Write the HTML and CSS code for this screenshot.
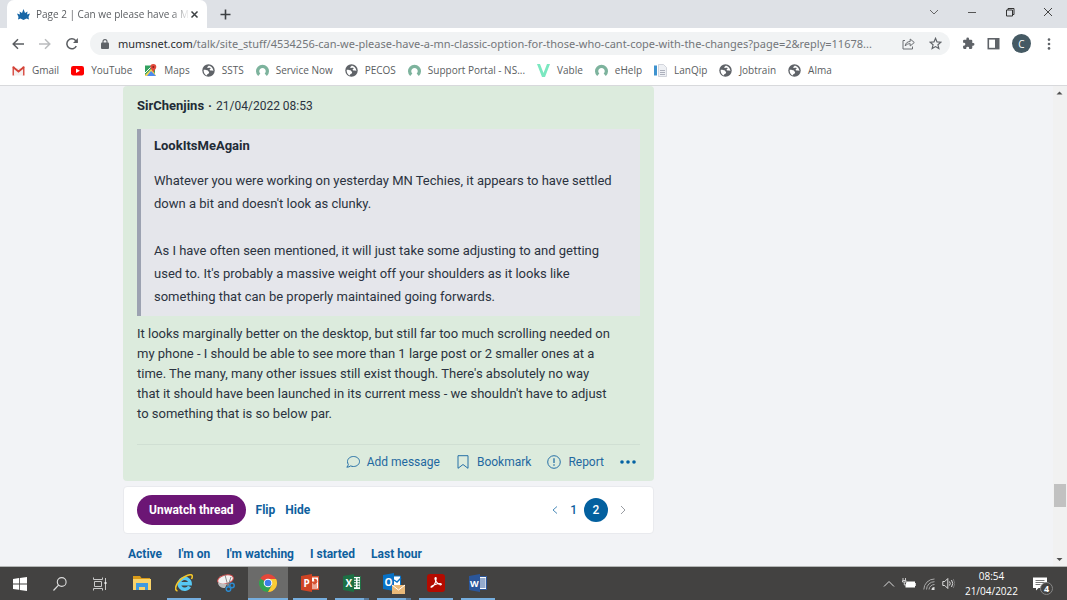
FILE: index.html
```html
<!DOCTYPE html>
<html lang="en">
<head>
<meta charset="utf-8">
<title>Page 2 | Can we please have a MN classic option</title>
<link rel="stylesheet" href="styles.css">
</head>
<body>
<svg class="defs" aria-hidden="true">
  <symbol id="globe" viewBox="0 0 24 24"><circle cx="12" cy="12" r="11.5" fill="#5f6368"/><path d="M3 11c2-1 5 1 8 1 0 2 3 2 2 4-1 3-4 2-4 5-4-1-6-5-6-10zM12 3c-1 2-3 2-2 4 2 1 4-1 6 1 0 2-2 1-2 3 2 2 4 0 7 2 0-5-4-10-9-10z" fill="#fff"/></symbol>
  <symbol id="ring" viewBox="0 0 24 24"><path d="M6 20a9 9 0 1 1 12 0" fill="none" stroke="#7db39d" stroke-width="6"/></symbol>
</svg>

<header class="browser">
  <div class="tabstrip">
    <div class="tab">
      <svg class="favicon i13" viewBox="0 0 26 24"><path d="M0 10l6 2-1-6 5 3 3-8 3 8 5-3-1 6 6-2-3 7 1 5-5-2-6 3-6-3-5 2 1-5z" fill="#1766a6"/></svg>
      <span class="tab-title">Page 2 | Can we please have a M</span>
      <button class="tab-close" aria-label="Close tab"><svg class="i9" viewBox="0 0 9 9"><path d="M1.500 1.500l6 6M7.500 1.500l-6 6" stroke="#3c4043" stroke-width="1.500"/></svg></button>
    </div>
    <button class="newtab" aria-label="New tab"><svg class="i11" viewBox="0 0 11 11"><path d="M5.500 .5v10M.5 5.500h10" stroke="#3c4043" stroke-width="1.600"/></svg></button>
    <div class="window-buttons">
      <button aria-label="Search tabs"><svg class="i10" viewBox="0 0 10 10"><path d="M1 3l4 4 4-4" fill="none" stroke="#666" /></svg></button>
      <button aria-label="Minimise"><svg class="i10" viewBox="0 0 10 10"><path d="M1 5.500h8" stroke="#555"/></svg></button>
      <button aria-label="Restore"><svg class="i10" viewBox="0 0 10 10"><path d="M1.500 3h6v6h-6zM3 3V1.500h6v6H7.500" fill="none" stroke="#333"/></svg></button>
      <button aria-label="Close"><svg class="i10" viewBox="0 0 10 10"><path d="M1 1l8 8M9 1L1 9" stroke="#444"/></svg></button>
    </div>
  </div>

  <div class="toolbar">
    <div class="nav">
      <button aria-label="Back"><svg class="i12" viewBox="0 0 12 12"><path d="M12 6H1.500M6 1.200L1.200 6 6 10.800" fill="none" stroke="#5a5d61" stroke-width="1.500"/></svg></button>
      <button aria-label="Forward"><svg class="i12" viewBox="0 0 12 12"><path d="M0 6h10.500M6 1.200L10.800 6 6 10.800" fill="none" stroke="#babcbe" stroke-width="1.500"/></svg></button>
      <button aria-label="Reload"><svg class="i12" viewBox="0 0 12 12"><path d="M10.300 8.200A5 5 0 1 1 9.600 2.500L11 4" fill="none" stroke="#5a5d61" stroke-width="1.500"/><path d="M11.900 0v5H7z" fill="#5a5d61"/></svg></button>
    </div>
    <div class="omnibox">
      <svg class="lock" viewBox="0 0 8 10"><rect y="3.500" width="8" height="6.500" rx="1" fill="#5f6368"/><path d="M2 4V2.600a2 2 0 0 1 4 0V4" fill="none" stroke="#5f6368" stroke-width="1.100"/></svg>
      <span class="url"><b>mumsnet.com</b>/talk/site_stuff/4534256-can-we-please-have-a-mn-classic-option-for-those-who-cant-cope-with-the-changes?page=2&amp;reply=11678...</span>
      <button aria-label="Share"><svg class="i13" viewBox="0 0 13 13"><path d="M3 3.500H1v8.500h9.500V9.500M3.200 9c.4-3 2-4.300 5-4.500V2L12.300 5.500 8.200 9V6.700C6 6.700 4.500 7.300 3.200 9z" fill="none" stroke="#6b6e72"/></svg></button>
      <button aria-label="Bookmark this page"><svg class="i13" viewBox="0 0 24 24"><path d="M12 2.500l2.800 6.600 7.200.6-5.500 4.700 1.700 7-6.200-3.700-6.200 3.700 1.700-7L2 9.700l7.200-.6z" fill="none" stroke="#5f6368" stroke-width="2.200"/></svg></button>
    </div>
    <div class="tools">
      <button aria-label="Extensions"><svg class="i13" viewBox="0 0 24 24"><path d="M20.500 11H19V7a2 2 0 0 0-2-2h-4V3.500a2.500 2.500 0 0 0-5 0V5H4a2 2 0 0 0-2 2v3.800h1.500a2.700 2.700 0 0 1 0 5.400H2V20a2 2 0 0 0 2 2h3.800v-1.500a2.700 2.700 0 0 1 5.400 0V22H17a2 2 0 0 0 2-2v-4h1.500a2.500 2.500 0 0 0 0-5z" fill="#5f6368"/></svg></button>
      <button aria-label="Side panel"><svg class="i13" viewBox="0 0 13 13"><rect x="1.300" y="1.800" width="10.400" height="9.800" fill="#fff" stroke="#5f6368" stroke-width="1.600"/><path d="M8 1.800h3.700v9.800H8z" fill="#5f6368"/></svg></button>
      <button class="avatar" aria-label="Profile">C</button>
      <button aria-label="Menu"><svg class="i12" viewBox="0 0 12 12"><g fill="#5f6368"><circle cx="6" cy="1.600" r="1.300"/><circle cx="6" cy="6" r="1.300"/><circle cx="6" cy="10.400" r="1.300"/></g></svg></button>
    </div>
  </div>

  <nav class="bookmarks" aria-label="Bookmarks">
    <a href="#"><svg class="i13" viewBox="0 0 13 13"><path d="M.5 2.500h1.800v9H.5zM10.700 2.500h1.800v9h-1.800z" fill="#d9534a"/><path d="M2 4v7.500h9V4" fill="#f5f0f0"/><path d="M1 3l5.500 4.500L12 3" fill="none" stroke="#d44236" stroke-width="1.800"/></svg>Gmail</a>
    <a href="#"><svg class="i13" viewBox="0 0 13 13"><rect y="2" width="13" height="9.500" rx="2.200" fill="#f00"/><path d="M5 4.500v4.500l4-2.250z" fill="#fff"/></svg>YouTube</a>
    <a href="#"><svg class="i13" viewBox="0 0 13 13"><path d="M1 1.500h10v10.500H1z" fill="#34a261"/><path d="M1 11L8 4l4 8H1z" fill="#f3d35c"/><path d="M3 12l4-5 5 5z" fill="#4c8af0"/><path d="M1 9l6-6" stroke="#fff"/><path d="M9.300 0a3 3 0 0 0-3 3c0 2 2 2.800 3 5.500 1-2.700 3-3.500 3-5.500a3 3 0 0 0-3-3z" fill="#e04a3c"/><circle cx="9.300" cy="3" r="1" fill="#8d201b"/></svg>Maps</a>
    <a href="#"><svg class="i13"><use href="#globe"/></svg>SSTS</a>
    <a href="#"><svg class="i13"><use href="#ring"/></svg>Service Now</a>
    <a href="#"><svg class="i13"><use href="#globe"/></svg>PECOS</a>
    <a href="#"><svg class="i13"><use href="#ring"/></svg>Support Portal - NS...</a>
    <a href="#"><svg class="i13" viewBox="0 0 13 13"><path d="M0 0h3l3.500 9L10 0h3L8 13H5z" fill="#7be8c0"/></svg>Vable</a>
    <a href="#"><svg class="i13"><use href="#ring"/></svg>eHelp</a>
    <a href="#"><svg class="i13" viewBox="0 0 13 13"><path d="M0 1.500h3v10H0z" fill="#3f93cf"/><path d="M4.500.5h5l3 3V12.500h-8z" fill="#eef0f4" stroke="#c3c6d0" stroke-width=".7"/><path d="M6 6.500h5M6 8.500h5M6 10.500h5" stroke="#9aa0ad" stroke-width=".8"/></svg>LanQip</a>
    <a href="#"><svg class="i13"><use href="#globe"/></svg>Jobtrain</a>
    <a href="#"><svg class="i13"><use href="#globe"/></svg>Alma</a>
  </nav>
</header>

<div class="viewport">
  <main class="thread">
    <article class="post">
      <header class="post-head"><strong>SirChenjins</strong><span>·</span><time>21/04/2022 08:53</time></header>
      <blockquote class="quote">
        <strong>LookItsMeAgain</strong>
        <p>Whatever you were working on yesterday MN Techies, it appears to have settled down a bit and doesn't look as clunky.</p>
        <p>As I have often seen mentioned, it will just take some adjusting to and getting used to. It's probably a massive weight off your shoulders as it looks like something that can be properly maintained going forwards.</p>
      </blockquote>
      <p class="post-body">It looks marginally better on the desktop, but still far too much scrolling needed on my phone - I should be able to see more than 1 large post or 2 smaller ones at a time. The many, many other issues still exist though. There's absolutely no way that it should have been launched in its current mess - we shouldn't have to adjust to something that is so below par.</p>
      <footer class="actions">
        <button><svg class="i14" viewBox="0 0 14 14"><path d="M7.500 1.500c3.300 0 6 2.200 6 5s-2.700 5-6 5c-1 0-2-.2-2.800-.6-1 .8-2.300 1.300-3.900 1.300.8-.8 1.300-1.700 1.500-2.700-.5-.9-.8-1.900-.8-3 0-2.800 2.700-5 6-5z"/></svg>Add message</button>
        <button><svg class="i14" viewBox="0 0 14 14"><path d="M2 .7h10v12.600L7 9.500l-5 3.800z"/></svg>Bookmark</button>
        <button><svg class="i14" viewBox="0 0 14 14"><circle cx="7" cy="7" r="6.300"/><path d="M7 3.300v4.700M7 9.300v1.500" stroke-width="1.300"/></svg>Report</button>
        <button class="more" aria-label="More"><svg viewBox="0 0 16 4"><circle cx="2" cy="2" r="1.800"/><circle cx="8" cy="2" r="1.800"/><circle cx="14" cy="2" r="1.800"/></svg></button>
      </footer>
    </article>

    <section class="controls">
      <button class="unwatch">Unwatch thread</button>
      <a href="#">Flip</a>
      <a href="#">Hide</a>
      <nav class="pager" aria-label="Pages">
        <a class="arrow" href="#" aria-label="Previous"><svg class="i10" viewBox="0 0 10 10"><path d="M7 1.500L3 5l4 3.500" fill="none" stroke="#4c8cba"/></svg></a>
        <a href="#">1</a>
        <a href="#" class="current" aria-current="page">2</a>
        <a class="arrow" href="#" aria-label="Next"><svg class="i10" viewBox="0 0 10 10"><path d="M3 1l4 4-4 4" fill="none" stroke="#9a9da3"/></svg></a>
      </nav>
    </section>

    <nav class="filters" aria-label="Threads">
      <a href="#">Active</a><a href="#">I'm on</a><a href="#">I'm watching</a><a href="#">I started</a><a href="#">Last hour</a>
    </nav>
  </main>
  <div class="scrollbar" aria-hidden="true">
    <svg viewBox="0 0 13 13"><path d="M3.500 8.500l3-3 3 3z" fill="#505050"/></svg>
    <div class="track"><div class="thumb"></div></div>
    <svg viewBox="0 0 13 13"><path d="M3.500 5l3 3 3-3z" fill="#505050"/></svg>
  </div>
</div>

<footer class="taskbar">
  <div class="system">
    <button aria-label="Start"><svg class="i14" viewBox="0 0 14 14"><path d="M0 2l6-.9v5.400H0zM6.800 1L14 0v6.500H6.800zM0 7.400h6v5.400L0 12zM6.800 7.400H14V14l-7.200-1z" fill="#fff"/></svg></button>
    <button aria-label="Search"><svg class="i14" viewBox="0 0 14 14"><circle cx="8.700" cy="5" r="4.400" fill="none" stroke="#ddd" stroke-width="1.100"/><path d="M5.500 8.200L.5 13.500" stroke="#ddd" stroke-width="1.200"/></svg></button>
    <button aria-label="Task view"><svg class="i14" viewBox="0 0 14 14"><path d="M.5 .5v2h9v-2M.5 13.500v-2h9v2M1.500 4.500h7v5h-7zM12.500 1v4M12.500 7v6" fill="none" stroke="#c9c9c9"/><path d="M11.500 5h2v2h-2z" fill="#eee"/></svg></button>
  </div>
  <div class="apps">
    <button aria-label="File Explorer"><svg class="i18" viewBox="0 0 18 18"><path d="M0 2h7l1.500 2H17v3H0z" fill="#d99a18"/><path d="M0 5h18v11H0z" fill="#f9d36a"/><path d="M3 9h12v7h-3v-3H6v3H3z" fill="#3f9ae0"/></svg></button>
    <button class="open" aria-label="Internet Explorer"><svg class="i18" viewBox="0 0 18 18"><path d="M14.500 12.500a5.500 5.500 0 1 1 .7-2.700H5" fill="none" stroke="#57c8f3" stroke-width="3.400"/><path d="M2.500 17C-2 16 2 6.500 10 2.500c4-2 7-2.500 7.300-.5.200 1-.3 2-.8 3" fill="none" stroke="#f2c52a" stroke-width="1.600"/></svg></button>
    <button aria-label="Snipping Tool"><svg class="i18" viewBox="0 0 18 18"><ellipse cx="8.500" cy="5.500" rx="8" ry="4.500" fill="#f2f2f2" stroke="#cf4a4a" transform="rotate(-15 8.500 5.500)"/><path d="M1 8c3 2 6 2 9 2l-2 4c-4 0-7-2-7-6z" fill="#bdbdbd"/><path d="M8 1l3 11M14 3l-3 9" stroke="#888"/><circle cx="11.500" cy="15" r="2.300" fill="none" stroke="#2c8bd0" stroke-width="1.500"/><circle cx="15" cy="11.500" r="2.200" fill="none" stroke="#2c8bd0" stroke-width="1.500"/></svg></button>
    <button class="open active" aria-label="Chrome"><svg class="i18" viewBox="0 0 18 18"><circle cx="9" cy="9" r="9" fill="#e4473a"/><path d="M9 9L1.200 4.500A9 9 0 0 0 9 18l4-6.500z" fill="#31a352"/><path d="M9 5h8.100A9 9 0 0 1 9 18l4-7z" fill="#fbcc34"/><circle cx="9" cy="9" r="4.300" fill="#fff"/><circle cx="9" cy="9" r="3.300" fill="#3c7ee8"/></svg></button>
    <button class="open" aria-label="PowerPoint"><svg class="i18" viewBox="0 0 18 18"><path d="M9 2h9v14H9z" fill="#d8502f"/><path d="M10 3.500h7v11h-7z" fill="#fff"/><path d="M11 11h5M11 13h5M14 8h-3a2.500 2.500 0 1 0 2.500-3z" stroke="#d8502f" fill="#d8502f"/><path d="M0 2l11-2v18L0 16z" fill="#cf4424"/><text x="2.500" y="13">P</text></svg></button>
    <button class="open split" aria-label="Excel"><svg class="i18" viewBox="0 0 18 18"><path d="M9 2.500h8.500v13H9z" fill="#fff" stroke="#1f7044"/><path d="M11 5h2M14.500 5h2M11 7.500h2M14.500 7.500h2M11 10h2M14.500 10h2M11 12.500h2M14.500 12.500h2" stroke="#1f7044" stroke-width="1.400"/><path d="M0 2l11-2v18L0 16z" fill="#1d7044"/><text x="2.500" y="13">X</text></svg></button>
    <button class="open split" aria-label="Outlook"><svg class="outlook" viewBox="0 0 22 22"><path d="M9 4h8.500v10H9z" fill="#fff" stroke="#0872c7"/><path d="M11 8l3 2 4-4" fill="none" stroke="#0872c7" stroke-width="1.400"/><path d="M0 3l11-2v18L0 17z" fill="#0872c7"/><text x="1.500" y="14">O</text><path d="M9 13h13v9H9z" fill="#eab978"/><path d="M9 13l6.500 5 6.500-5" fill="none" stroke="#fff"/></svg></button>
    <button class="open" aria-label="Acrobat Reader"><svg class="i18" viewBox="0 0 18 18"><rect width="18" height="18" rx="3" fill="#b30b00"/><path d="M4 13c1.500 1 5-3.500 5.200-8.500 0-1.500-1.500-1.200-1.200.3.600 3 3.500 5.700 5.500 6 1.300 0 1-1.300-.5-1.300-3 0-8.500 2-9 3.500z" fill="none" stroke="#fff" stroke-width="1.200"/></svg></button>
    <button class="open" aria-label="Word"><svg class="i18" viewBox="0 0 18 18"><path d="M9 2.500h8.500v13H9z" fill="#fff" stroke="#2b569a"/><path d="M11 5h5.500M11 7h5.500M11 9h5.500M11 11h5.500M11 13h5.500" stroke="#2b569a"/><path d="M0 2l11-2v18L0 16z" fill="#2b569a"/><text class="wide" x="1" y="12.500">W</text></svg></button>
  </div>
  <div class="tray">
    <svg class="i12" viewBox="0 0 12 12"><path d="M1 8.500l5-5 5 5" fill="none" stroke="#ddd"/></svg>
    <svg class="i14" viewBox="0 0 14 14"><path d="M4.500 4.500H13v6H3.500V8z" fill="#fff"/><path d="M13.500 6v3M1 1v2M3.500 1v2M.5 3.500h3.500v1.500h-3.500zM2.300 5v3h1.700" fill="none" stroke="#ddd" stroke-width=".9"/></svg>
    <svg class="i12" viewBox="0 0 12 12"><g fill="none" stroke="#aaa"><path d="M.8 11.500A10.700 10.700 0 0 1 11.500 1M3.500 11.500a8 8 0 0 1 8-7.800M6 11.500a5.500 5.500 0 0 1 5.500-5"/></g><path d="M8.500 12A3 3 0 0 1 11.500 9v3z" fill="#ddd"/></svg>
    <svg class="i13" viewBox="0 0 13 13"><path d="M.8 4.500h2l3-3v10l-3-3h-2z" fill="none" stroke="#ddd"/><path d="M7.500 4.500q1.500 2 0 4M9.500 3q2.500 3.500 0 7" fill="none" stroke="#ddd"/><path d="M11.300 2q3 4.500 0 9" fill="none" stroke="#777"/></svg>
    <div class="clock"><time>08:54</time><time>21/04/2022</time></div>
    <button class="notes" aria-label="Notifications"><svg class="i14" viewBox="0 0 14 14"><path d="M0 .5h14v10.500H5.500L3 13.500V11H0z" fill="#fff"/><path d="M2.500 3.500h9M2.500 5.500h9M2.500 7.500h5" stroke="#555" stroke-width=".8"/></svg><span class="badge">4</span></button>
  </div>
</footer>
</body>
</html>
```
FILE: styles.css
```css
* { box-sizing: border-box; }
body {
  margin: 0;
  height: 100vh;
  display: flex;
  flex-direction: column;
  overflow: hidden;
  font-family: Roboto, sans-serif;
  font-size: 13px;
  color: #2b3340;
  background: #f2f3f6;
}
button { border: 0; padding: 0; background: none; font: inherit; color: inherit; display: flex; align-items: center; justify-content: center; }
a { color: inherit; text-decoration: none; }
svg { display: block; flex: none; }
.defs { position: absolute; width: 0; height: 0; }
.i9 { width: 9px; height: 9px; }
.i10 { width: 10px; height: 10px; }
.i11 { width: 11px; height: 11px; }
.i12 { width: 12px; height: 12px; }
.i13 { width: 13px; height: 13px; }
.i14 { width: 14px; height: 14px; }
.i18 { width: 18px; height: 18px; }

/* Browser frame */
.browser { flex: none; background: #fff; border-bottom: 1px solid #d8d9dc; font-family: "Open Sans", "Noto Sans", sans-serif; color: #5a5d61; }
.tabstrip { display: flex; height: 28px; background: #dee1e6; padding-left: 7px; }
.tab { display: flex; align-items: center; width: 200px; padding: 0 8px 0 10px; background: #fff; border-radius: 7px 7px 0 0; font-size: 10px; }
.favicon { margin-right: 6px; }
.tab-title { flex: 1; white-space: nowrap; -webkit-mask-image: linear-gradient(to right, #000 88%, transparent); mask-image: linear-gradient(to right, #000 88%, transparent); }
.newtab { width: 36px; }
.window-buttons { display: flex; margin-left: auto; height: 24px; }
.window-buttons button { width: 38px; }
.toolbar { display: flex; align-items: center; height: 31px; padding: 0 12px; }
.nav { display: flex; gap: 15px; width: 78px; }
.omnibox { flex: 1; min-width: 0; display: flex; align-items: center; gap: 14px; height: 23px; padding: 0 8px 0 11px; background: #f1f3f4; border-radius: 12px; }
.lock { width: 8px; height: 10px; margin-right: -5px; }
.url { flex: 1; min-width: 0; overflow: hidden; white-space: nowrap; font-family: "Noto Sans", sans-serif; font-size: 11px; color: #73767a; }
.url b { font-weight: 400; color: #2a2c2f; }
.tools { display: flex; align-items: center; gap: 12px; padding-left: 12px; }
.avatar { width: 19px; height: 19px; border-radius: 50%; background: #455a64; color: #fff; font-size: 10px; }
.bookmarks { display: flex; align-items: center; gap: 12px; height: 26px; padding: 0 12px 4px; font-size: 10px; white-space: nowrap; }
.bookmarks a { display: flex; align-items: center; gap: 7px; }

/* Page */
.viewport { flex: 1; min-height: 0; display: flex; overflow: hidden; border-bottom: 1px solid #b4b6b5; }
.thread { flex: 0 1 531px; margin-left: 123px; margin-right: auto; }
.post { padding: 12px 14px 0; background: #dcebdd; border-radius: 4px; }
.post-head { display: flex; gap: 4px; line-height: 16px; font-size: 12px; }
.post-head strong, .post-head span { font-size: 13px; font-weight: 700; }
strong { font-weight: 700; color: #222b36; }
.quote { margin: 15px 0 8px; padding: 8px 13px; border-left: 4px solid #9ca2b1; background: #e5e6eb; line-height: 23px; }
.quote strong { line-height: 18px; display: block; }
.quote p { margin: 14px 0 0; }
.quote p + p { margin-top: 24px; }
.post-body { margin: 0 0 20px; padding-right: 28px; line-height: 20px; }
.actions { display: flex; justify-content: flex-end; gap: 16px; height: 37px; padding: 0 4px 2px 0; border-top: 1px solid #d0dfd3; color: #1f68a0; font-size: 12px; }
.actions button { gap: 7px; }
.actions svg { fill: none; stroke: #2670a6; stroke-width: 1; }
.actions .more svg { width: 16px; height: 4px; fill: #0462a3; stroke: none; }
.controls { display: flex; align-items: center; gap: 10px; margin-top: 5px; height: 48px; padding: 0 22px 0 13px; background: #fff; border: 1px solid #e9eaee; border-radius: 4px; font-size: 12px; font-weight: 700; color: #0e5f9e; }
.unwatch { height: 30px; padding: 0 12px; border-radius: 15px; background: #6c1675; color: #fff; font-weight: 700; }
.pager { display: flex; align-items: center; margin-left: auto; gap: 7px; font-weight: 500; }
.pager .arrow { padding: 0 3px; }
.pager .current { width: 24px; height: 24px; border-radius: 50%; display: grid; place-items: center; background: #03609f; color: #fff; }
.filters { display: flex; gap: 16px; padding: 12px 5px; line-height: 16px; font-size: 12px; font-weight: 700; color: #0e5f9e; }
.scrollbar { width: 14px; display: flex; flex-direction: column; background: #f1f1f1; }
.scrollbar svg { width: 13px; height: 13px; }
.track { flex: 1; padding: 0 1px 46px; display: flex; flex-direction: column; justify-content: flex-end; }
.thumb { height: 23px; background: #c1c1c1; }

/* Taskbar */
.taskbar { flex: none; display: flex; height: 33px; background: #434241; color: #fff; font-family: "Open Sans", "Noto Sans", sans-serif; }
.system { display: flex; }
.system button { width: 40px; }
.apps { display: flex; gap: 2px; padding-left: 2px; }
.apps button { width: 40px; border-bottom: 2px solid transparent; }
.apps .open { width: 34px; margin: 0 3px; border-bottom-color: #76aede; }
.apps .active { width: 40px; margin: 0; background: #6b6b6a; }
.apps .split { border-image: linear-gradient(to right, #76aede 80%, #55799b 80%) 2; border-image-width: 0 0 2px; }
.apps text { font: 700 10px "Open Sans", sans-serif; fill: #fff; }
.apps .wide { font-size: 9px; }
.outlook { width: 22px; height: 22px; }
.tray { display: flex; align-items: center; gap: 7px; margin-left: auto; padding-right: 14px; }
.clock { display: grid; justify-items: center; margin-left: 3px; font-size: 10px; line-height: 15px; }
.notes { position: relative; width: 20px; margin-left: 8px; justify-content: flex-start; }
.badge { position: absolute; left: 7px; top: 5px; width: 13px; height: 13px; border: 1px solid #888; border-radius: 50%; background: #434241; font-size: 9px; font-weight: 700; line-height: 11px; text-align: center; }
```
